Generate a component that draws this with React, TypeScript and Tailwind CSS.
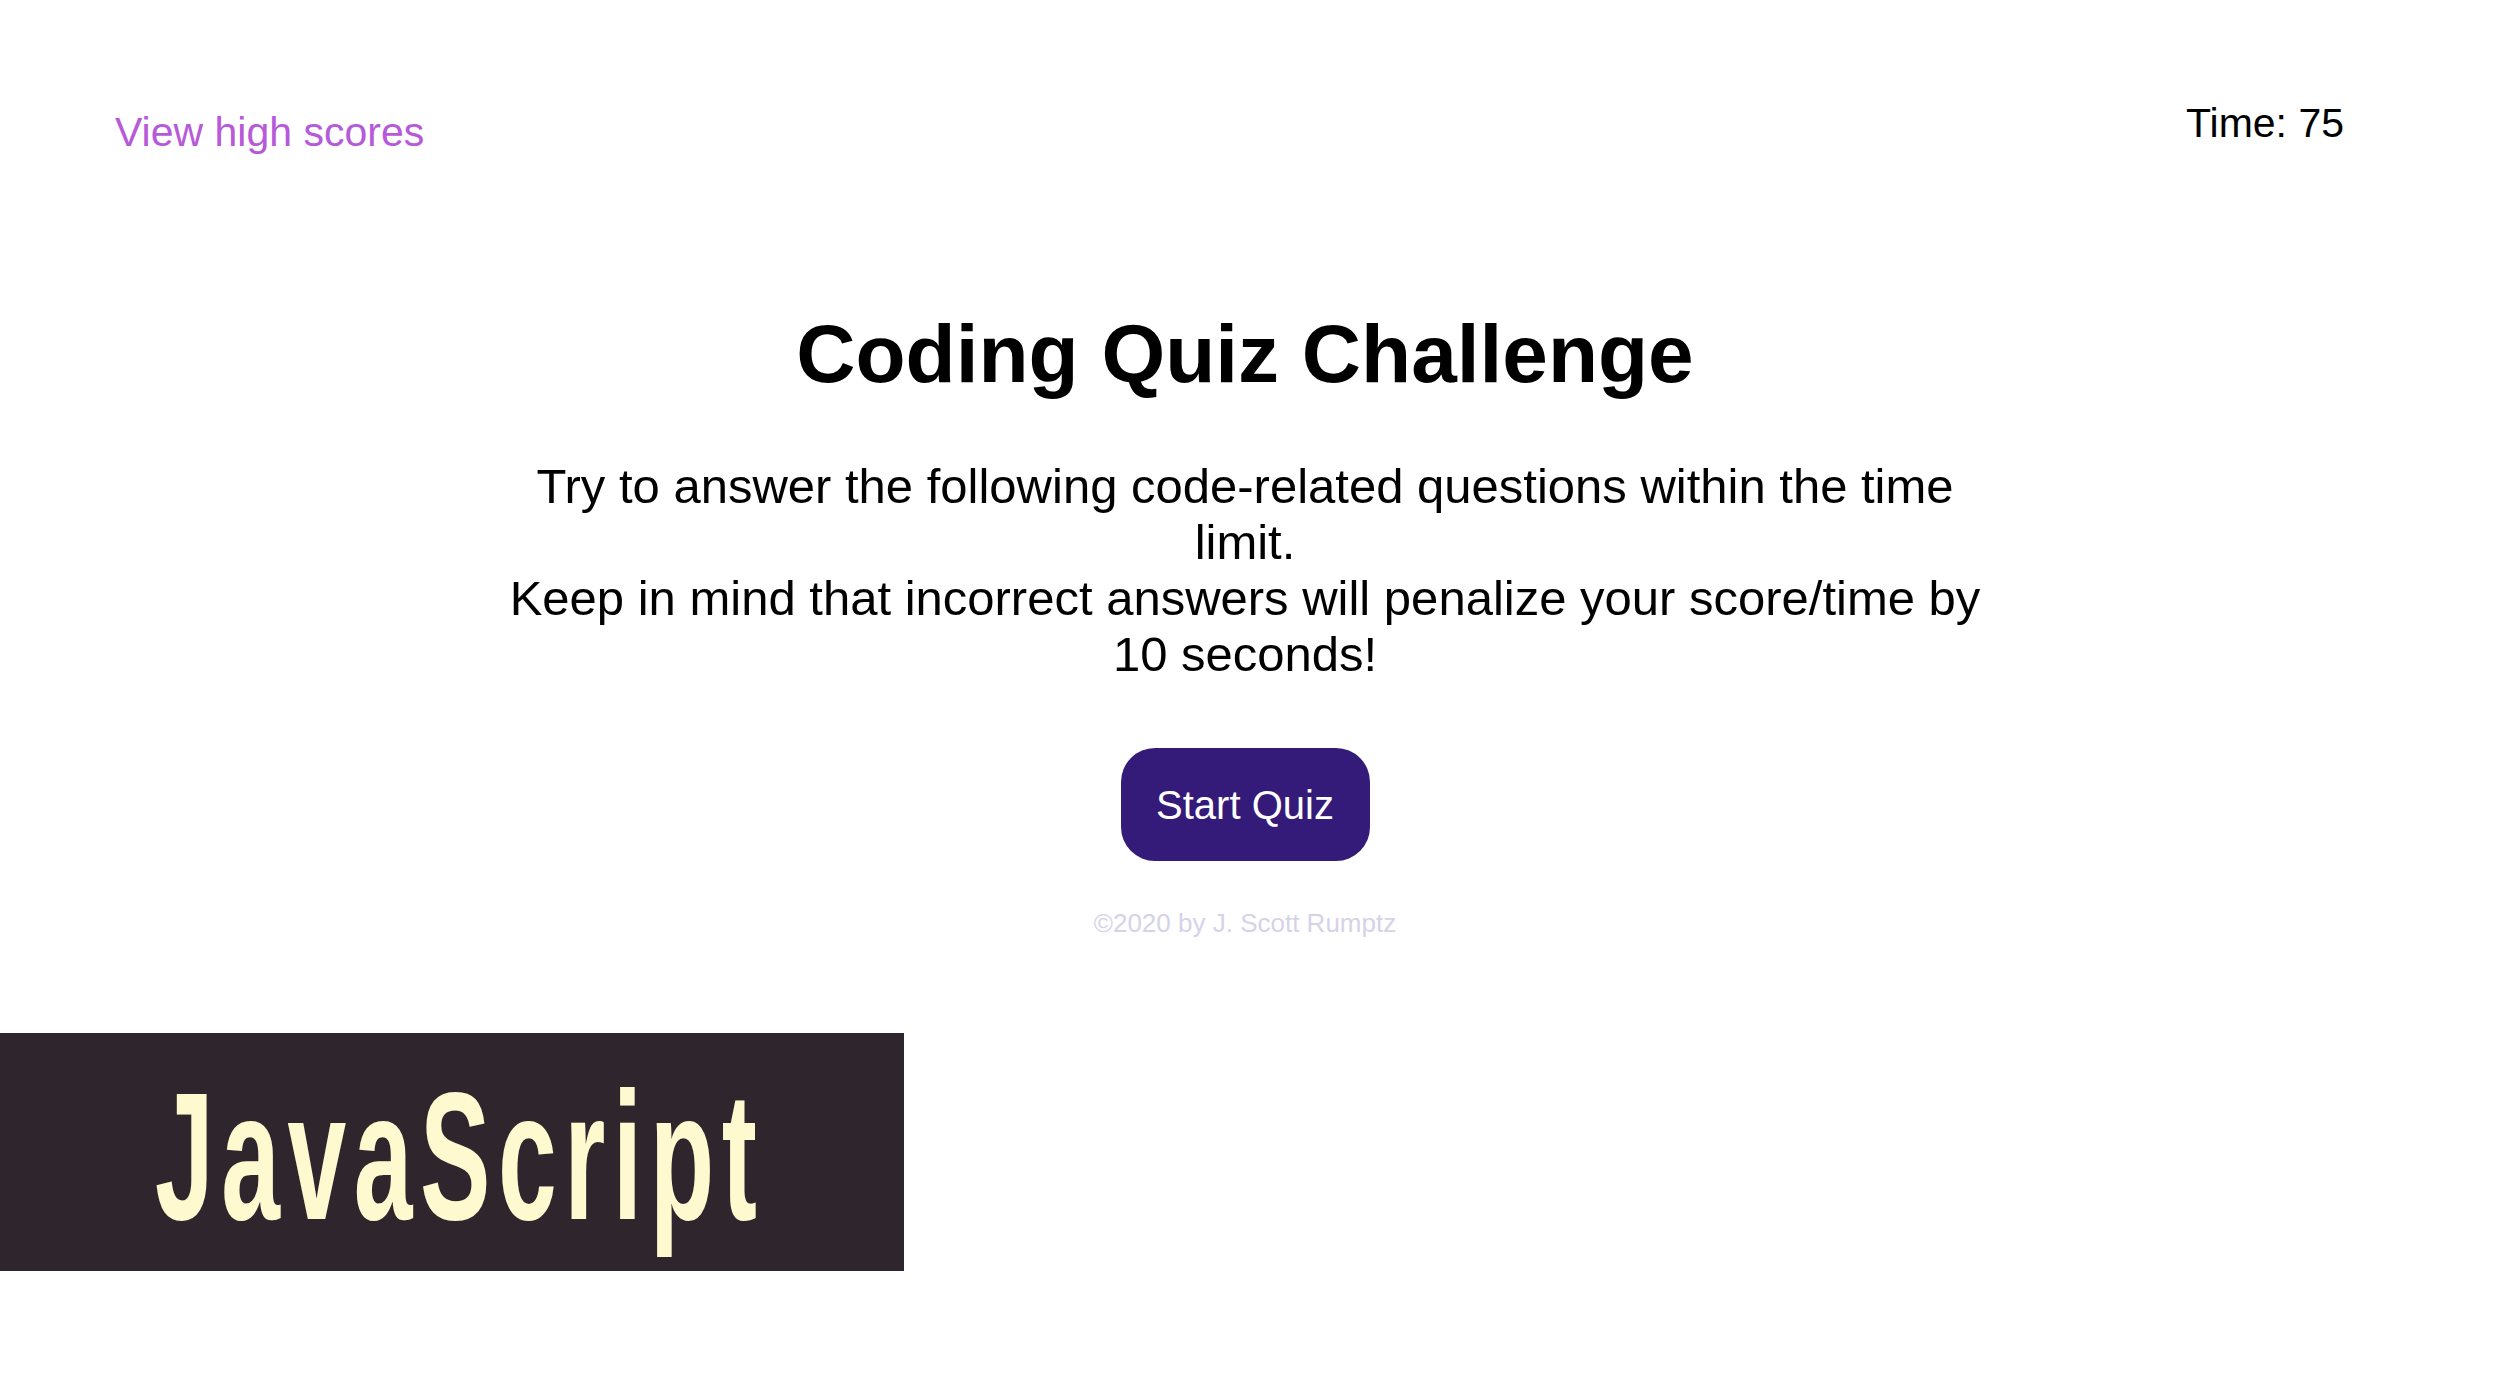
import React from "react";

const App = () => {
  return (
    <div className="min-h-screen w-full bg-white font-['Liberation_Sans',Arial,sans-serif] text-black">
      <header className="flex justify-between items-start pl-[115px] pr-[156px] pt-[100px]">
        <a href="#" className="mt-[9px] text-[41px] leading-[46px] text-[#b65ad9]">
          View high scores
        </a>
        <span className="text-[41px] leading-[46px]">Time: 75</span>
      </header>

      <main className="flex flex-col items-center mt-[152px] pr-[10px]">
        <h1 className="text-[82px] leading-[94px] font-bold">Coding Quiz Challenge</h1>
        <p className="mt-[57px] w-[1500px] text-center text-[49px] leading-[56px]">
          Try to answer the following code-related questions within the time limit.
          <br />
          Keep in mind that incorrect answers will penalize your score/time by 10 seconds!
        </p>
        <button className="mt-[66px] h-[113px] w-[249px] rounded-[34px] bg-[#341a79] text-[40px] leading-[46px] text-white">
          Start Quiz
        </button>
        <footer className="mt-[47px] text-[26px] leading-[30px] text-[#d6d2e8]">
          ©2020 by J. Scott Rumptz
        </footer>
      </main>

      <div className="mt-[95px] flex h-[238px] w-[904px] items-center bg-[#2f262d] pl-[155px] overflow-hidden">
        <span className="origin-left scale-x-[0.58] whitespace-nowrap pt-[8px] text-[182px] leading-[182px] font-bold tracking-[13px] text-[#fff9cf]">
          JavaScript
        </span>
      </div>
    </div>
  );
};

export default App;
